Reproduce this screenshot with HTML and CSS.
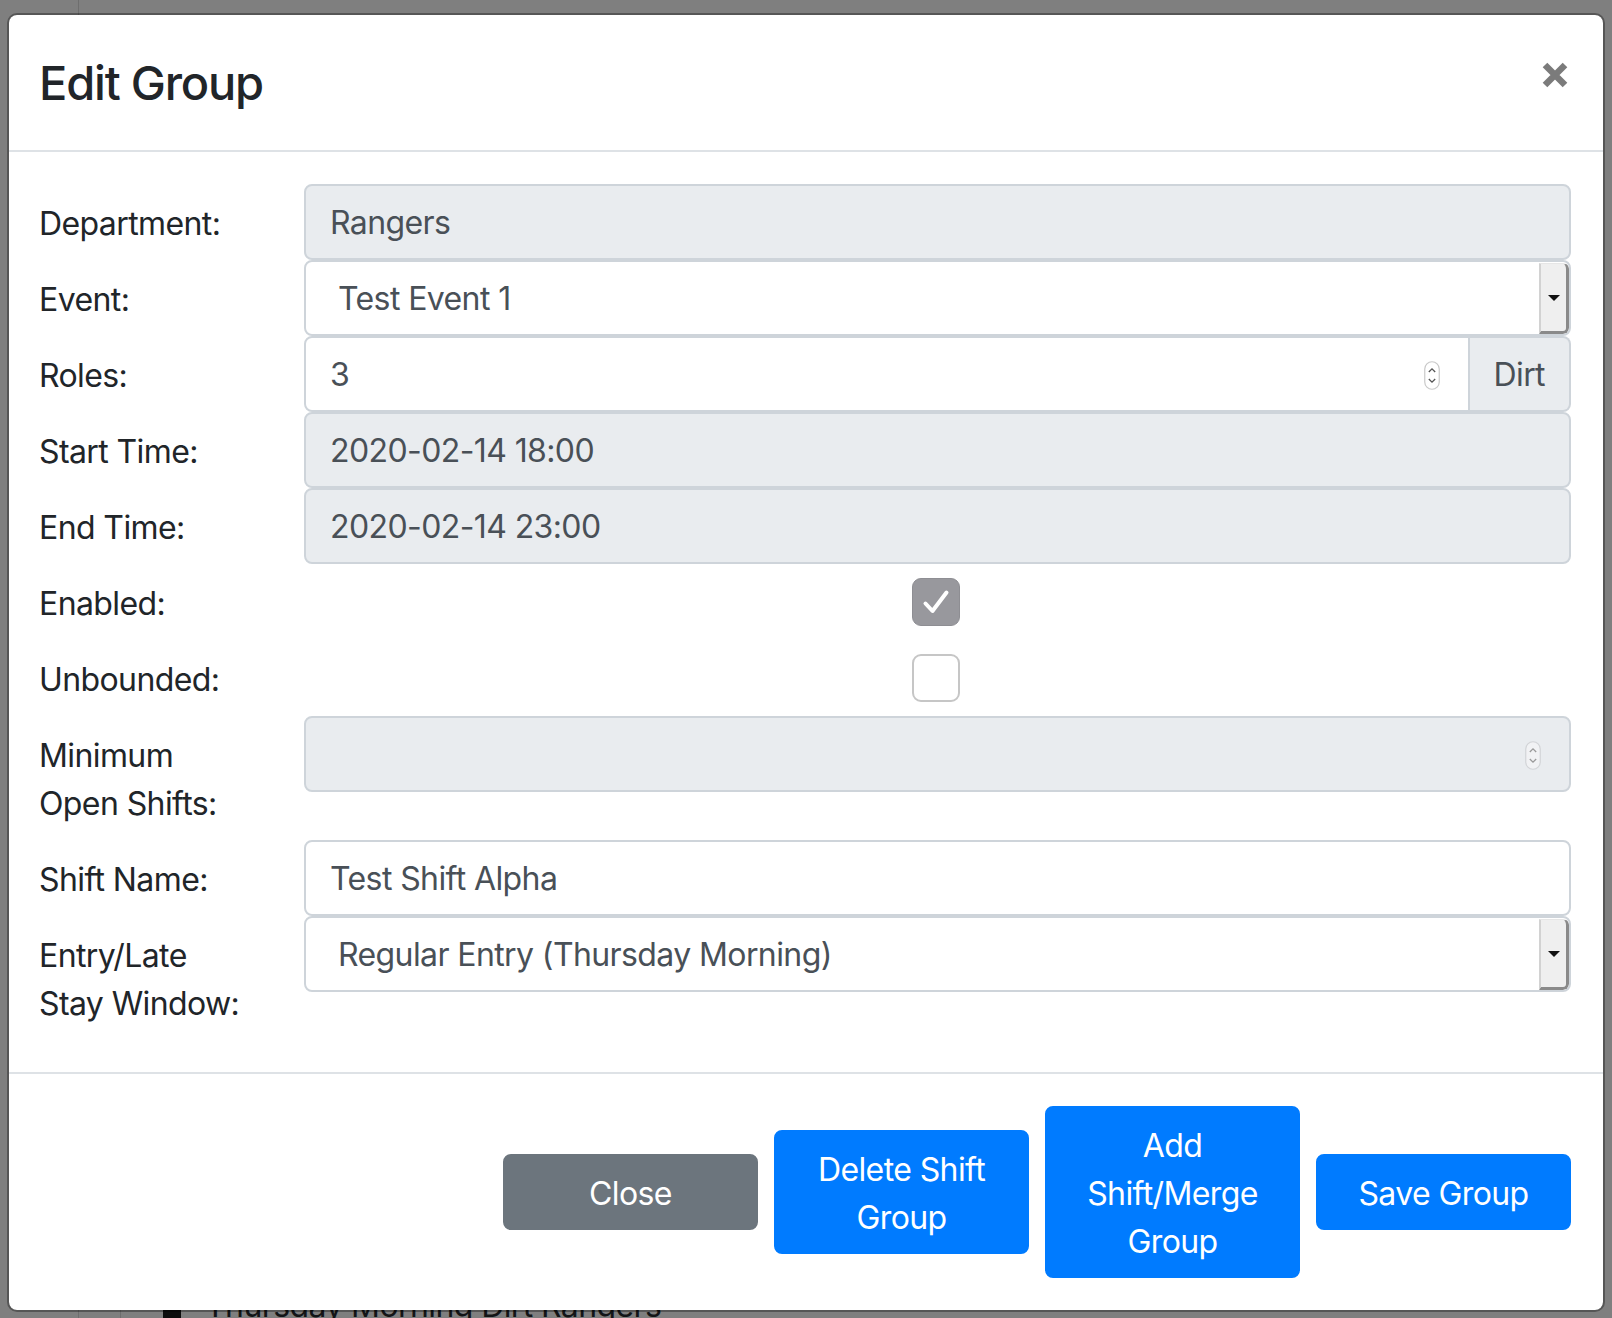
FILE: index.html
```html
<!DOCTYPE html>
<html lang="en">
<head>
<meta charset="utf-8">
<title>Edit Group</title>
<link rel="stylesheet" href="styles.css">
</head>
<body>
<div class="behind">
  <div class="bline bline-a"></div>
  <div class="bline bline-b"></div>
  <div class="behind-row"><span class="behind-icon"></span>Thursday Morning Dirt Rangers</div>
</div>

<div class="modal">
  <div class="modal-header">
    <h4 class="modal-title">Edit Group</h4>
    <button class="close" type="button" aria-label="Close">
      <svg width="26" height="26" viewBox="0 0 26 26"><path d="M3 3 L23 23 M23 3 L3 23" stroke="#7b7b7b" stroke-width="6.5" stroke-linecap="butt"/></svg>
    </button>
  </div>

  <div class="modal-body">
    <div class="form-row">
      <label class="col-label">Department:</label>
      <div class="control readonly">Rangers</div>
    </div>
    <div class="form-row">
      <label class="col-label">Event:</label>
      <div class="control select"><span class="select-text">Test Event 1</span><span class="select-btn"><svg width="12" height="6" viewBox="0 0 12 6"><path d="M0 0 H12 L6 6 Z" fill="#111"/></svg></span></div>
    </div>
    <div class="form-row">
      <label class="col-label">Roles:</label>
      <div class="input-group">
        <div class="control number grouped"><span class="num-text">3</span>
          <svg class="spin" width="16" height="29" viewBox="0 0 16 29"><rect x="0.75" y="0.75" width="14.5" height="27.5" rx="7.25" fill="#fff" stroke="#c9c9c9" stroke-width="1.2"/><path d="M4.8 11 L8 7.8 L11.2 11" fill="none" stroke="#555" stroke-width="1.3"/><path d="M4.8 18 L8 21.2 L11.2 18" fill="none" stroke="#555" stroke-width="1.3"/></svg>
        </div>
        <div class="addon">Dirt</div>
      </div>
    </div>
    <div class="form-row">
      <label class="col-label">Start Time:</label>
      <div class="control readonly">2020-02-14 18:00</div>
    </div>
    <div class="form-row">
      <label class="col-label">End Time:</label>
      <div class="control readonly">2020-02-14 23:00</div>
    </div>
    <div class="form-row">
      <label class="col-label">Enabled:</label>
      <div class="check-cell">
        <span class="checkbox checked"><svg width="48" height="48" viewBox="0 0 48 48"><path d="M13.5 25.5 L20.5 33 L34.5 14.5" fill="none" stroke="#fff" stroke-width="4" stroke-linecap="round" stroke-linejoin="round"/></svg></span>
      </div>
    </div>
    <div class="form-row">
      <label class="col-label">Unbounded:</label>
      <div class="check-cell">
        <span class="checkbox"></span>
      </div>
    </div>
    <div class="form-row">
      <label class="col-label">Minimum<br>Open Shifts:</label>
      <div class="control readonly number"><span class="num-text"></span>
        <svg class="spin" width="16" height="29" viewBox="0 0 16 29"><rect x="0.75" y="0.75" width="14.5" height="27.5" rx="7.25" fill="#f1f2f4" stroke="#d2d4d7" stroke-width="1.2"/><path d="M4.8 11 L8 7.8 L11.2 11" fill="none" stroke="#9a9a9a" stroke-width="1.3"/><path d="M4.8 18 L8 21.2 L11.2 18" fill="none" stroke="#9a9a9a" stroke-width="1.3"/></svg>
      </div>
    </div>
    <div class="form-row">
      <label class="col-label">Shift Name:</label>
      <div class="control">Test Shift Alpha</div>
    </div>
    <div class="form-row">
      <label class="col-label">Entry/Late<br>Stay Window:</label>
      <div class="control select"><span class="select-text">Regular Entry (Thursday Morning)</span><span class="select-btn"><svg width="12" height="6" viewBox="0 0 12 6"><path d="M0 0 H12 L6 6 Z" fill="#111"/></svg></span></div>
    </div>
  </div>

  <div class="modal-footer">
    <button class="btn btn-secondary" type="button">Close</button>
    <button class="btn btn-primary" type="button">Delete Shift Group</button>
    <button class="btn btn-primary" type="button">Add Shift/Merge Group</button>
    <button class="btn btn-primary" type="button">Save Group</button>
  </div>
</div>
</body>
</html>
```

FILE: styles.css
```css
* { box-sizing: border-box; }

html, body {
  margin: 0;
  padding: 0;
}

body {
  background: #7f7f7f;
  font-family: "Inter", "Noto Sans", "Liberation Sans", sans-serif;
  color: #212529;
  width: 1612px;
  height: 1318px;
  overflow: hidden;
  position: relative;
  letter-spacing: -0.6px;
}

/* page content behind the backdrop */
.behind {
  position: absolute;
  inset: 0;
  z-index: 0;
}
.bline {
  position: absolute;
  top: 0;
  bottom: 0;
  width: 1px;
  background: #6e6e6e;
}
.bline-a { left: 78px; }
.bline-b { left: 120px; top: 1290px; }
.behind-row {
  position: absolute;
  left: 163px;
  top: 1282px;
  font-size: 32px;
  line-height: 48px;
  color: #131517;
  display: flex;
  align-items: center;
  gap: 24px;
  white-space: nowrap;
}
.behind-icon {
  width: 18px;
  height: 30px;
  background: #0d0d0d;
  display: inline-block;
}

/* modal */
.modal {
  position: relative;
  z-index: 1;
  margin: 13px 0 0 7px;
  width: 1598px;
  background: #fff;
  border: 2px solid rgba(0, 0, 0, 0.32);
  border-radius: 10px;
  background-clip: padding-box;
}

.modal-header {
  display: flex;
  justify-content: space-between;
  align-items: flex-start;
  padding: 32px 32px 31px 30px;
  border-bottom: 2px solid #dee2e6;
}

.modal-title {
  margin: 0;
  font-size: 47px;
  font-weight: 500;
  line-height: 72px;
  letter-spacing: -1.2px;
  color: #212529;
}

.close {
  background: none;
  border: 0;
  padding: 0;
  margin: 15px 3px 0 0;
  width: 26px;
  height: 26px;
  display: block;
  cursor: pointer;
}
.close svg { display: block; }

.modal-body {
  padding: 32px;
}

.form-row {
  display: grid;
  grid-template-columns: 263px 1fr;
  align-items: start;
}

.col-label {
  font-size: 32px;
  line-height: 48px;
  padding: 16px 0 12px;
  margin-left: -2px;
  color: #212529;
}

.control {
  height: 76px;
  border: 2px solid #ced4da;
  border-radius: 8px;
  background: #fff;
  padding: 2px 24px 0;
  font-size: 32px;
  line-height: 70px;
  color: #495057;
  white-space: nowrap;
  overflow: hidden;
}

.control.readonly {
  background: #e9ecef;
}

.control.select {
  display: flex;
  align-items: stretch;
  padding: 0 0 0 32px;
  line-height: 74px;
}
.select-text {
  flex: 1;
}
.select-btn {
  width: 30px;
  margin: 1px 0 0 0;
  height: 71px;
  background: #efefef;
  border-left: 2px solid #d2d2d2;
  border-top: 1px solid #e6e6e6;
  border-right: 3px solid #8a8a8a;
  border-bottom: 3px solid #8a8a8a;
  border-radius: 0 6px 6px 0;
  display: flex;
  align-items: center;
  justify-content: center;
}
.select-btn svg { display: block; }

.control.number {
  display: flex;
  align-items: center;
  padding-right: 28px;
}
.num-text { flex: 1; }
.spin { display: block; flex: none; }

.input-group {
  display: flex;
}
.input-group .grouped {
  flex: 1;
  border-top-right-radius: 0;
  border-bottom-right-radius: 0;
}
.addon {
  height: 76px;
  border: 2px solid #ced4da;
  border-left: 0;
  border-radius: 0 8px 8px 0;
  background: #e9ecef;
  padding: 2px 24px 0;
  font-size: 32px;
  line-height: 70px;
  color: #495057;
}

.check-cell {
  height: 76px;
  display: flex;
  align-items: center;
  justify-content: center;
  padding-right: 4px;
}
.checkbox {
  width: 48px;
  height: 48px;
  border-radius: 9px;
  border: 2px solid #c6c6c6;
  background: #fff;
  display: block;
}
.checkbox.checked {
  background: #98989d;
  border: 1px solid #8e8e93;
}
.checkbox svg { display: block; margin: -1px; }

.modal-footer {
  border-top: 2px solid #dee2e6;
  padding: 24px;
  display: flex;
  justify-content: flex-end;
  align-items: center;
}

.btn {
  width: 255px;
  margin: 8px;
  padding: 14px 24px 10px;
  border: 2px solid transparent;
  border-radius: 8px;
  font-family: inherit;
  font-size: 32px;
  line-height: 48px;
  letter-spacing: -0.6px;
  color: #fff;
  text-align: center;
  cursor: pointer;
}

.btn-secondary {
  background: #6c757d;
  border-color: #6c757d;
}
.btn-primary {
  background: #007bff;
  border-color: #007bff;
}
```
